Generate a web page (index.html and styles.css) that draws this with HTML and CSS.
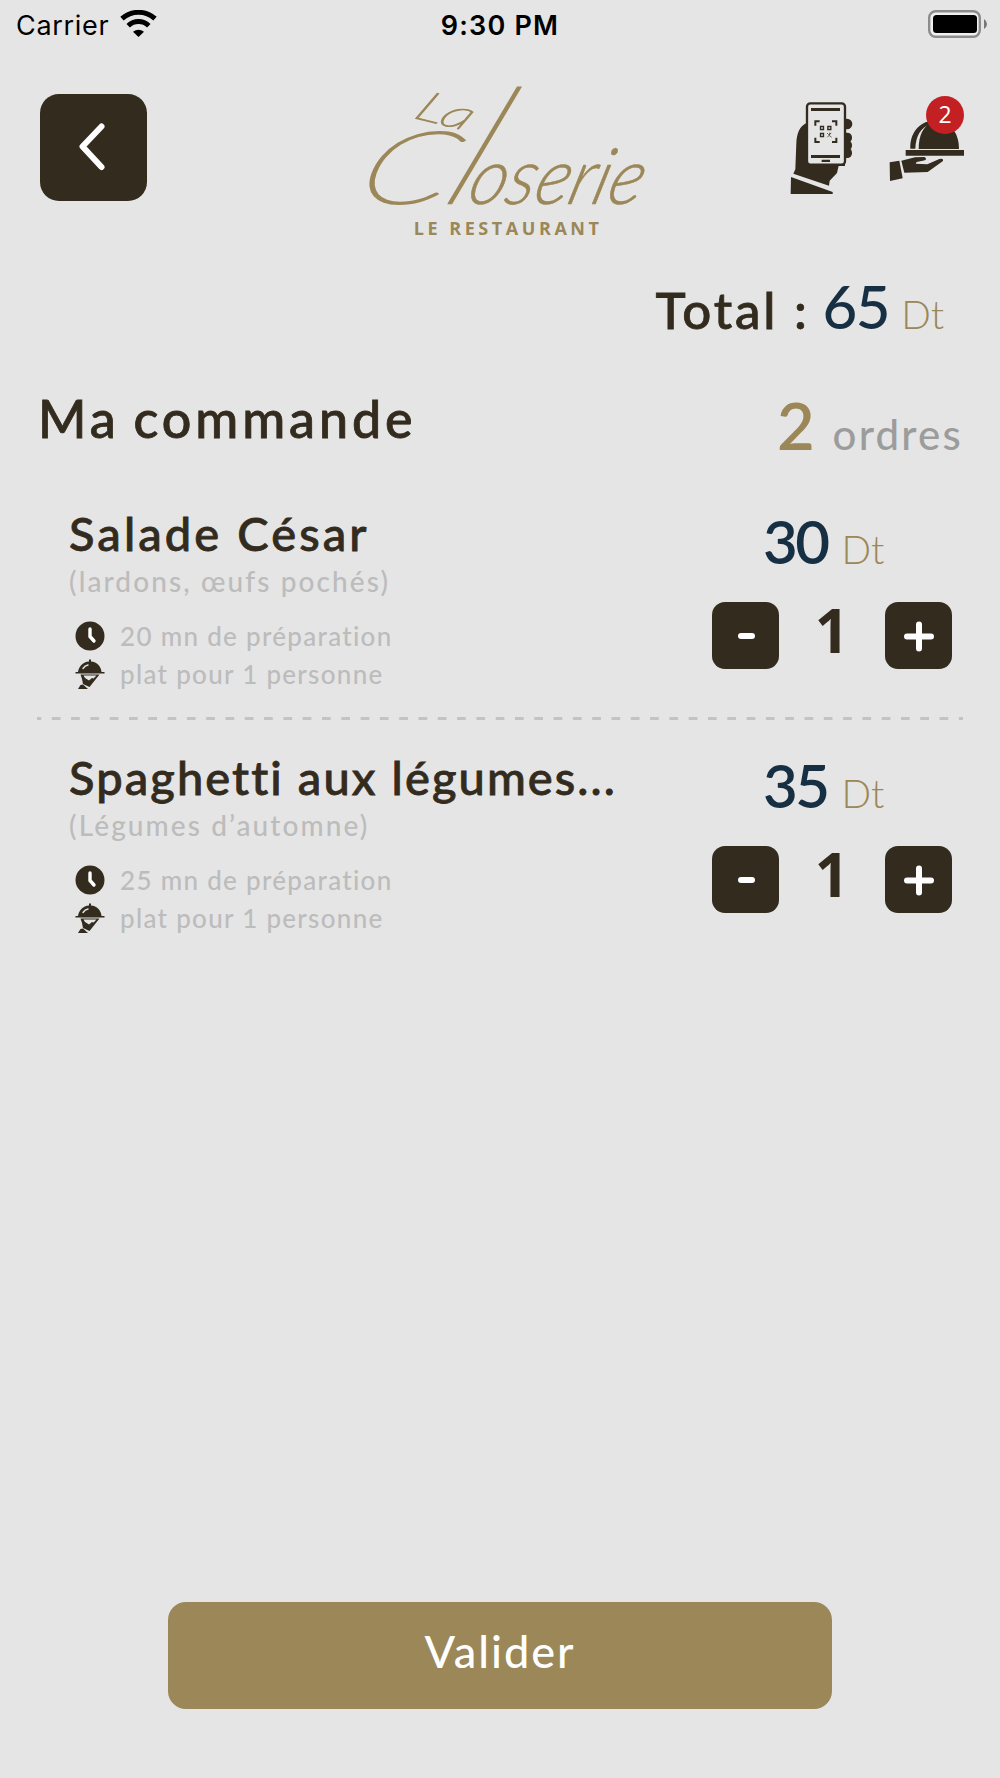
FILE: index.html
```html
<!DOCTYPE html>
<html lang="fr">
<head>
    <meta charset="utf-8">
    <title>Ma commande</title>
    <link rel="stylesheet" href="styles.css">
</head>
<body>
    <div class="screen">
        <div class="status-bar">
            <div class="carrier">
                <span>Carrier</span>
                <svg class="wifi" viewBox="0 0 37 27">
                    <path d="M18.500 27l-5.500-5.300q5.500-4 11 0z"/>
                    <path class="arc" d="M8.200 15.700a15 15 0 0 1 20.600 0M2 8.700a24.500 24.500 0 0 1 33 0"/>
                </svg>
            </div>
            <div class="time">9:30 PM</div>
            <svg class="battery" viewBox="0 0 60 28">
                <rect class="shell" x="1.200" y="1.200" width="50.600" height="25.600" rx="6.500"/>
                <rect x="5" y="5" width="44" height="18" rx="3.500"/>
                <path class="nub" d="M56 9v10q3-2 3-5t-3-5z"/>
            </svg>
        </div>

        <div class="header">
            <button class="back">
                <svg viewBox="0 0 107 107"><path d="M61.500 32.500L42.500 52.500l19 20.500"/></svg>
            </button>
            <svg class="logo" viewBox="54 42 831 465">
                <g class="script">
                    <text class="thin small" transform="translate(186 142) rotate(14) skewX(-18)" font-size="125" textLength="165" lengthAdjust="spacingAndGlyphs">La</text>
                    <text class="thin" transform="translate(8 400) skewX(-20)" font-size="300" textLength="270" lengthAdjust="spacingAndGlyphs">C</text>
                    <text class="thin" transform="translate(265 400) skewX(-24)" font-size="480" textLength="115" lengthAdjust="spacingAndGlyphs">l</text>
                    <text class="rest" transform="translate(345 402) skewX(-16)" font-size="235" textLength="520" lengthAdjust="spacingAndGlyphs">oserie</text>
                </g>
                <text class="tagline" x="191" y="496" textLength="556">LE RESTAURANT</text>
            </svg>
            <div class="actions">
                <svg class="scan" viewBox="60 66 189 276">
                    <path d="M108 130C88 140 80 162 79 190L76 268 70 281 177 317 179 302 201 279 206 258H225V238H114Z"/>
                    <path d="M63 291L188 336V342H62Z"/>
                    <circle cx="231" cy="132" r="16"/>
                    <rect x="210" y="158" width="36" height="30" rx="14"/>
                    <rect x="210" y="181" width="36" height="30" rx="14"/>
                    <rect x="210" y="204" width="36" height="30" rx="14"/>
                    <rect class="phone" x="111" y="70" width="114" height="184" rx="10"/>
                    <path d="M123 84h87v9h-87zM123 225h87v9h-87zM155 239h25v7h-25z"/>
                    <path class="frame" d="M136 137v-13h13M186 124h13v13M199 173v13h-13M149 186h-13v-13"/>
                    <path class="code" d="M151.500 139.500h9v9h-9zM173.500 139.500h9v9h-9zM151.500 160.500h9v9h-9z"/>
                    <path class="dots" d="M171 159l5 5 8-5M172 172l5-6 8 6M179 158v8"/>
                </svg>
                <div class="cart">
                    <svg viewBox="357 120 228 186">
                        <path d="M446 207C446 165 460 140 484 127H510C548 133 567 165 567 207Z"/>
                        <path d="M421 206C420 160 446 130 478 124L482 131C452 143 438 166 436 206Z"/>
                        <path d="M407 210h175v17H407z"/>
                        <path d="M359 247L388 242 398 295 360 303Z"/>
                        <path d="M394 242L435 232 463 231Q472 236 465 241L440 246 437 251 472 253 508 237Q521 234 519 243L473 276 403 278Z"/>
                    </svg>
                    <span class="badge">2</span>
                </div>
            </div>
        </div>

        <div class="total">
            <span class="total-label">Total :</span>
            <span class="total-value">65</span>
            <span class="currency">Dt</span>
        </div>

        <div class="heading">
            <h1>Ma commande</h1>
            <div class="orders"><span class="count">2</span><span class="word">ordres</span></div>
        </div>

        <div class="item">
            <div class="info">
                <h2 class="name-salad">Salade César</h2>
                <p class="desc">(lardons, œufs pochés)</p>
                <div class="meta">
                    <svg viewBox="0 0 30 30"><circle cx="15" cy="15" r="14.500"/><path class="hand" d="M15 8v7.500l4 4.500"/></svg>
                    <span>20 mn de préparation</span>
                </div>
                <div class="meta">
                    <svg viewBox="0 0 30 30"><path d="M14 .5h2v2C22 3 26 7 26.500 13H29.500V14.500H.5V13H3C4 7 8 3 14 2.500z"/><path d="M5.500 15.500H24.500L14.500 28 8 25 7 20z"/><path d="M3 30l2.500-4 2.500-.5 5 4.500z"/><path class="light" d="M8 9.500q2-3 5-3.500"/><path class="gap" d="M8.500 16.500h13l-3 3-1.500-.5-3 2.500-4-2.500z"/></svg>
                    <span>plat pour 1 personne</span>
                </div>
            </div>
            <div class="side">
                <div class="price"><span class="amount">30</span><span class="currency">Dt</span></div>
                <div class="stepper">
                    <button><svg viewBox="0 0 67 67"><path d="M29 34h11"/></svg></button>
                    <span class="qty">1</span>
                    <button><svg viewBox="0 0 67 67"><path d="M22 34.500h24M34 22.500v24"/></svg></button>
                </div>
            </div>
        </div>

        <svg class="divider" viewBox="0 0 926 3"><path d="M0 1.500h926"/></svg>

        <div class="item">
            <div class="info">
                <h2>Spaghetti aux légumes...</h2>
                <p class="desc">(Légumes d’automne)</p>
                <div class="meta">
                    <svg viewBox="0 0 30 30"><circle cx="15" cy="15" r="14.500"/><path class="hand" d="M15 8v7.500l4 4.500"/></svg>
                    <span>25 mn de préparation</span>
                </div>
                <div class="meta">
                    <svg viewBox="0 0 30 30"><path d="M14 .5h2v2C22 3 26 7 26.500 13H29.500V14.500H.5V13H3C4 7 8 3 14 2.500z"/><path d="M5.500 15.500H24.500L14.500 28 8 25 7 20z"/><path d="M3 30l2.500-4 2.500-.5 5 4.500z"/><path class="light" d="M8 9.500q2-3 5-3.500"/><path class="gap" d="M8.500 16.500h13l-3 3-1.500-.5-3 2.500-4-2.500z"/></svg>
                    <span>plat pour 1 personne</span>
                </div>
            </div>
            <div class="side">
                <div class="price"><span class="amount">35</span><span class="currency">Dt</span></div>
                <div class="stepper">
                    <button><svg viewBox="0 0 67 67"><path d="M29 34h11"/></svg></button>
                    <span class="qty">1</span>
                    <button><svg viewBox="0 0 67 67"><path d="M22 34.500h24M34 22.500v24"/></svg></button>
                </div>
            </div>
        </div>

        <button class="submit">Valider</button>
    </div>
</body>
</html>
```
FILE: styles.css
```css
* {
    box-sizing: border-box;
}
body {
    margin: 0;
    background: #e5e5e5;
    color: #322b1e;
    font-family: Lato, "Open Sans", sans-serif;
}
.screen {
    width: 1000px;
    height: 1778px;
    display: flex;
    flex-direction: column;
}
svg {
    display: block;
    flex: none;
}
h1, h2, p {
    margin: 0;
}
h1, h2, .total-label {
    -webkit-text-stroke: 0.8px #322b1e;
}
button {
    border: none;
    padding: 0;
    background: #322b1e;
    font-family: inherit;
    cursor: pointer;
}
button path {
    fill: none;
    stroke: white;
    stroke-width: 6;
    stroke-linecap: round;
    stroke-linejoin: round;
}

/* status bar */
.status-bar {
    height: 50px;
    padding: 0 12px 0 16px;
    display: grid;
    grid-template-columns: 1fr auto 1fr;
    line-height: 52px;
    font-family: Inter, sans-serif;
    font-size: 27px;
    color: black;
}
.carrier {
    display: flex;
    gap: 11px;
    letter-spacing: 0.7px;
}
.wifi {
    width: 37px;
    height: 27px;
    margin-top: 10px;
}
.wifi .arc {
    fill: none;
    stroke: black;
    stroke-width: 5;
}
.time {
    font-weight: 600;
    letter-spacing: 1.2px;
    margin-right: 4px;
}
.battery {
    width: 60px;
    height: 28px;
    margin-top: 10px;
    justify-self: end;
}
.battery .shell {
    fill: #f0f0f0;
    stroke: #8c8c8c;
    stroke-width: 2.4;
}
.battery .nub {
    fill: #777;
}

/* header */
.header {
    height: 200px;
    padding: 34px 35px 0 40px;
    display: flex;
    align-items: flex-start;
}
.back {
    width: 107px;
    height: 107px;
    margin-top: 10px;
    border-radius: 19px;
}
.logo {
    width: 277px;
    height: 155px;
    margin-left: 221px;
    fill: #9b8757;
    overflow: visible;
}
.script {
    font-style: italic;
    font-weight: 300;
}
.thin {
    font-weight: 100;
    stroke: #9b8757;
    stroke-width: 7;
}
.small {
    stroke-width: 4;
}
.rest {
    stroke: #9b8757;
    stroke-width: 1.5;
}
.tagline {
    font-family: "Open Sans", sans-serif;
    font-size: 54px;
    font-weight: 700;
}
.actions {
    margin-left: auto;
    display: flex;
    gap: 36px;
    fill: #322b1e;
}
.scan {
    width: 63px;
    height: 92px;
    margin-top: 18px;
}
.scan .phone {
    fill: #e5e5e5;
    stroke: #322b1e;
    stroke-width: 7;
}
.scan .frame, .scan .code, .scan .dots {
    fill: none;
    stroke: #322b1e;
    stroke-width: 6;
}
.scan .code {
    stroke-width: 4;
}
.scan .dots {
    stroke-width: 2;
}
.cart {
    position: relative;
    width: 76px;
    padding-top: 36px;
}
.cart svg {
    width: 76px;
    height: 62px;
}
.badge {
    position: absolute;
    top: 12px;
    right: 1px;
    width: 38px;
    height: 38px;
    border-radius: 50%;
    background: #c22023;
    color: white;
    font-family: "Open Sans", sans-serif;
    font-size: 23px;
    line-height: 37px;
    text-align: center;
}

/* total */
.total {
    height: 143px;
    padding: 26px 56px 0 0;
    display: flex;
    justify-content: flex-end;
    align-items: baseline;
}
.total-label {
    font-size: 51px;
    line-height: 51px;
    font-weight: 500;
    letter-spacing: 2.8px;
    margin-right: 13px;
}
.total-value {
    font-size: 60px;
    line-height: 60px;
    font-weight: 500;
    letter-spacing: -1.5px;
    color: #172f43;
    margin-right: 12px;
}
.currency {
    font-size: 39px;
    line-height: 39px;
    font-weight: 300;
    color: #9b8757;
}

/* order heading */
.heading {
    height: 117px;
    padding: 0 37px 0 38px;
    display: flex;
    justify-content: space-between;
    align-items: flex-start;
}
h1 {
    font-size: 52px;
    line-height: 51px;
    font-weight: 500;
    letter-spacing: 3.9px;
    word-spacing: -3px;
}
.orders {
    display: flex;
    align-items: baseline;
    gap: 18px;
}
.count {
    font-size: 65px;
    line-height: 65px;
    font-weight: 600;
    color: #9b8757;
}
.word {
    font-size: 42px;
    line-height: 42px;
    font-weight: 500;
    letter-spacing: 2.2px;
    color: #9c9c9c;
}

/* order lines */
.item {
    height: 183px;
    padding: 0 48px 0 69px;
    display: flex;
    justify-content: space-between;
}
.info {
    width: 560px;
}
h2 {
    font-size: 47px;
    line-height: 46px;
    font-weight: 500;
    letter-spacing: 2.1px;
    white-space: nowrap;
}
.name-salad {
    letter-spacing: 3.1px;
}
.desc {
    margin: 11px 0 22px;
    font-size: 28px;
    line-height: 28px;
    font-weight: 500;
    letter-spacing: 2.1px;
    color: #bcbcbc;
}
.meta {
    height: 38px;
    padding-left: 6px;
    display: flex;
    align-items: center;
    gap: 15px;
    font-size: 26px;
    line-height: 38px;
    font-weight: 500;
    letter-spacing: 1.3px;
    color: #bcbcbc;
    fill: #322b1e;
}
.meta svg {
    width: 30px;
    height: 30px;
}
.meta .hand {
    fill: none;
    stroke: white;
    stroke-width: 3.4;
    stroke-linecap: round;
}
.meta .light {
    fill: none;
    stroke: #e5e5e5;
    stroke-width: 1.4;
    stroke-linecap: round;
}
.meta .gap {
    fill: #e5e5e5;
}
.side {
    width: 240px;
}
.price {
    height: 92px;
    padding: 1px 0 0 51px;
    display: flex;
    align-items: baseline;
    gap: 14px;
}
.amount {
    font-size: 60px;
    line-height: 61px;
    font-weight: 600;
    letter-spacing: -2.5px;
    color: #172f43;
}
.stepper {
    display: flex;
    justify-content: space-between;
}
.stepper button {
    width: 67px;
    height: 67px;
    border-radius: 13px;
}
.qty {
    font-family: "Open Sans", sans-serif;
    font-size: 60px;
    line-height: 56px;
    font-weight: 700;
}
.divider {
    width: 926px;
    height: 3px;
    margin: 24px 37px 34px;
    stroke: #c3c3c3;
    stroke-width: 3;
    stroke-dasharray: 8.700 10.600;
    stroke-dashoffset: 4.500;
}

.submit {
    width: 664px;
    height: 107px;
    margin: auto auto 69px;
    border-radius: 18px;
    background: #9b8757;
    color: white;
    font-size: 45px;
    line-height: 97px;
    padding-bottom: 8px;
    font-weight: 500;
    letter-spacing: 2px;
}
```
